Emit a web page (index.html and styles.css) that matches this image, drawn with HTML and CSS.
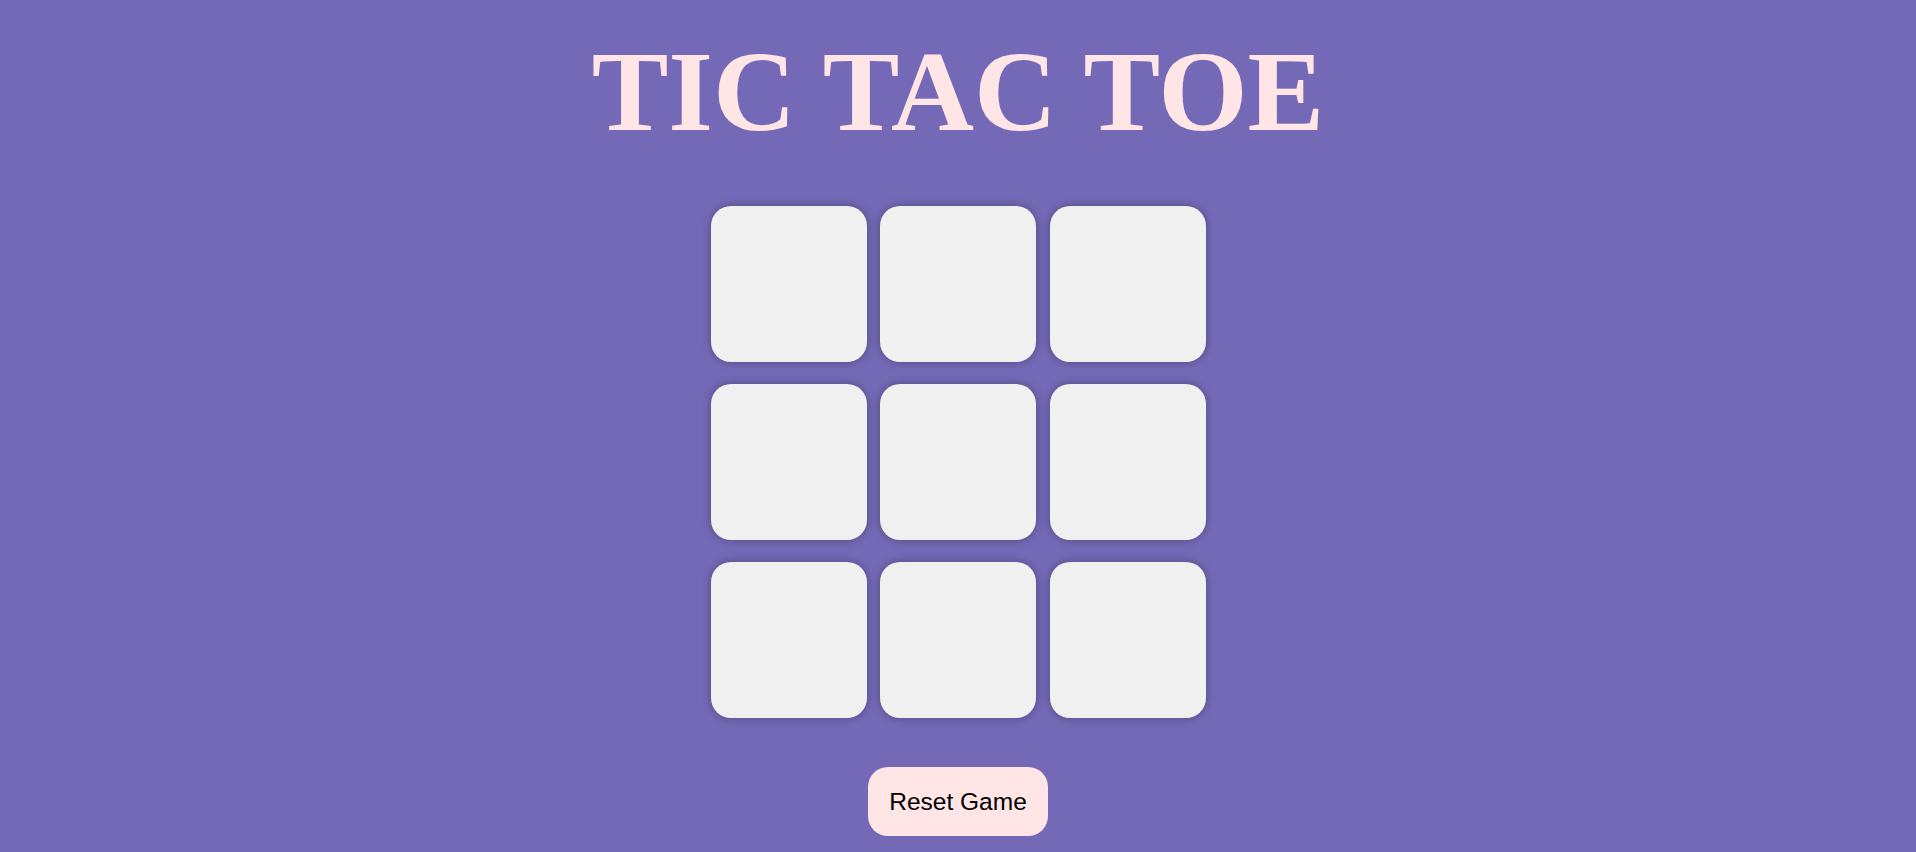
FILE: index.html
```html
<!DOCTYPE html>
<html lang="en">
<head>
<meta charset="utf-8">
<title>Tic Tac Toe</title>
<link rel="stylesheet" href="styles.css">
</head>
<body>
<main class="game">
  <h1 class="title">TIC TAC TOE</h1>
  <div class="board">
    <button class="cell"></button>
    <button class="cell"></button>
    <button class="cell"></button>
    <button class="cell"></button>
    <button class="cell"></button>
    <button class="cell"></button>
    <button class="cell"></button>
    <button class="cell"></button>
    <button class="cell"></button>
  </div>
  <button class="reset">Reset Game</button>
</main>
</body>
</html>
```

FILE: styles.css
```css
html, body {
  margin: 0;
  padding: 0;
  height: 100%;
}
body {
  background: #7469b6;
  overflow: hidden;
}
.game {
  display: flex;
  flex-direction: column;
  align-items: center;
}
.title {
  margin: 28px 0 0;
  font-family: "Times New Roman", "Liberation Serif", Tinos, Times, serif;
  font-weight: 700;
  font-size: 6vw;
  line-height: 128px;
  color: #ffe5e5;
}
.board {
  margin-top: 50px;
  display: grid;
  grid-template-columns: repeat(3, 156px);
  grid-auto-rows: 156px;
  column-gap: 13.5px;
  row-gap: 22px;
}
.cell {
  border: none;
  border-radius: 20px;
  background: #f0f0f0;
  box-shadow: 0 0 10px rgba(0, 0, 0, 0.3);
  padding: 0;
}
.reset {
  margin-top: 49px;
  width: 180px;
  height: 69px;
  border: none;
  border-radius: 20px;
  background: #ffe5e5;
  color: #000;
  font-family: "Liberation Sans", Arial, sans-serif;
  font-size: 24.5px;
  padding: 0;
}
```
